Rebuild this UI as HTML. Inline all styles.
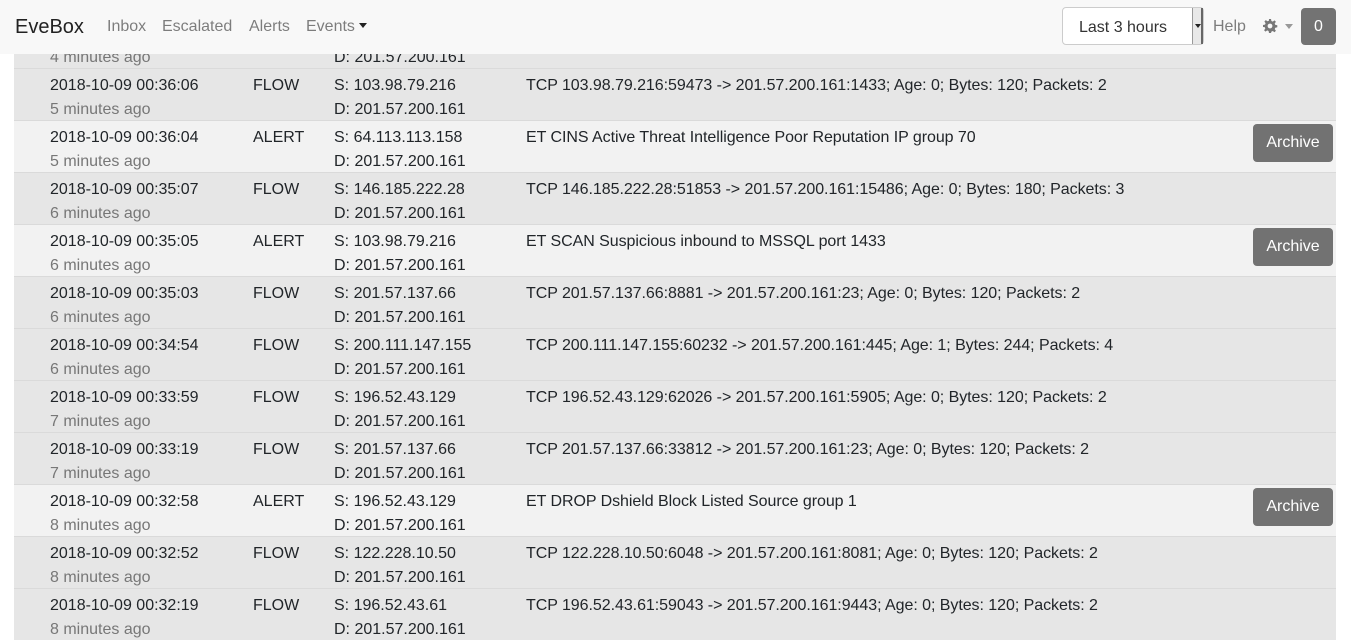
<!DOCTYPE html>
<html><head><meta charset="utf-8"><style>
*{box-sizing:border-box;margin:0;padding:0}
body{width:1351px;height:642px;overflow:hidden;background:#fff;font-family:"Liberation Sans",sans-serif;font-size:16px;color:#212529;position:relative}
.nav{position:absolute;top:0;left:0;width:1351px;height:54px;background:#f8f8f8;z-index:5}
.nav span{position:absolute;top:17px;line-height:20px;color:rgba(0,0,0,.5)}
.row{position:absolute;left:14px;width:1322px;height:52px;border-top:1px solid #dadada}
.f{background:#e6e6e6}.a{background:#f2f2f2}
.row div{position:absolute;line-height:24px;white-space:nowrap}
.ago{color:#777}
.row .btn{position:absolute;right:3px;top:3px;width:80px;height:38px;background:#727272;color:#fff;border-radius:4px;text-align:center;line-height:38px}
</style></head><body>
<div class="nav">
<span style="left:15px;top:16px;font-size:20px;color:#222;line-height:22px">EveBox</span>
<span style="left:107px">Inbox</span>
<span style="left:162px">Escalated</span>
<span style="left:249px">Alerts</span>
<span style="left:306px">Events <span style="position:static;display:inline-block;width:0;height:0;border-left:4px solid transparent;border-right:4px solid transparent;border-top:5px solid #222;vertical-align:3px"></span></span>
<div style="position:absolute;left:1062px;top:7px;width:142px;height:38px;border:1px solid #ccc;border-radius:4px;background:#fff"><div style="position:absolute;left:16px;top:10px;line-height:20px;color:#333">Last 3 hours</div><div style="position:absolute;right:0;top:0;width:11px;height:36px;background:#e8e8e8;border-left:1px solid #999;border-right:2px solid #666"><div style="position:absolute;left:2px;top:16px;border-left:3px solid transparent;border-right:3px solid transparent;border-top:4px solid #222"></div></div></div>
<span style="left:1213px">Help</span>
<span style="left:1262px;top:18px"><svg width="16" height="16" viewBox="0 0 16 16"><path fill="#777" d="M7 1h2l.4 2 1.4.6 1.7-1.2 1.4 1.4-1.2 1.7.6 1.4 2 .4v2l-2 .4-.6 1.4 1.2 1.7-1.4 1.4-1.7-1.2-1.4.6L9 15H7l-.4-2-1.4-.6-1.7 1.2-1.4-1.4 1.2-1.7-.6-1.4L1 9V7l2-.4.6-1.4-1.2-1.7 1.4-1.4 1.7 1.2 1.4-.6zM8 5.6A2.4 2.4 0 1 0 8 10.4 2.4 2.4 0 1 0 8 5.6z"/></svg></span>
<span style="left:1285px;top:24px;width:0;height:0;border-left:4px solid transparent;border-right:4px solid transparent;border-top:5px solid #999"></span>
<div style="position:absolute;left:1301px;top:8px;width:35px;height:37px;background:#737373;border-radius:4px;color:#fff;text-align:center;line-height:37px">0</div>
</div>
<div class="row f" style="top:16px"><div class="ago" style="left:36px;top:29px">4 minutes ago</div><div style="left:320px;top:29px">D: 201.57.200.161</div></div>
<div id="rows"></div>
<script>
var d=[
["2018-10-09 00:36:06","5","FLOW","103.98.79.216","TCP 103.98.79.216:59473 -> 201.57.200.161:1433; Age: 0; Bytes: 120; Packets: 2"],
["2018-10-09 00:36:04","5","ALERT","64.113.113.158","ET CINS Active Threat Intelligence Poor Reputation IP group 70"],
["2018-10-09 00:35:07","6","FLOW","146.185.222.28","TCP 146.185.222.28:51853 -> 201.57.200.161:15486; Age: 0; Bytes: 180; Packets: 3"],
["2018-10-09 00:35:05","6","ALERT","103.98.79.216","ET SCAN Suspicious inbound to MSSQL port 1433"],
["2018-10-09 00:35:03","6","FLOW","201.57.137.66","TCP 201.57.137.66:8881 -> 201.57.200.161:23; Age: 0; Bytes: 120; Packets: 2"],
["2018-10-09 00:34:54","6","FLOW","200.111.147.155","TCP 200.111.147.155:60232 -> 201.57.200.161:445; Age: 1; Bytes: 244; Packets: 4"],
["2018-10-09 00:33:59","7","FLOW","196.52.43.129","TCP 196.52.43.129:62026 -> 201.57.200.161:5905; Age: 0; Bytes: 120; Packets: 2"],
["2018-10-09 00:33:19","7","FLOW","201.57.137.66","TCP 201.57.137.66:33812 -> 201.57.200.161:23; Age: 0; Bytes: 120; Packets: 2"],
["2018-10-09 00:32:58","8","ALERT","196.52.43.129","ET DROP Dshield Block Listed Source group 1"],
["2018-10-09 00:32:52","8","FLOW","122.228.10.50","TCP 122.228.10.50:6048 -> 201.57.200.161:8081; Age: 0; Bytes: 120; Packets: 2"],
["2018-10-09 00:32:19","8","FLOW","196.52.43.61","TCP 196.52.43.61:59043 -> 201.57.200.161:9443; Age: 0; Bytes: 120; Packets: 2"]];
var h="";d.forEach(function(r,i){var t=68+i*52;var al=r[2]=="ALERT";
h+='<div class="row '+(al?'a':'f')+'" style="top:'+t+'px"><div style="left:36px;top:5px">'+r[0]+'</div><div class="ago" style="left:36px;top:29px">'+r[1]+' minutes ago</div><div style="left:239px;top:5px">'+r[2]+'</div><div style="left:320px;top:5px">S: '+r[3]+'</div><div style="left:320px;top:29px">D: 201.57.200.161</div><div style="left:512px;top:5px;letter-spacing:-0.05px">'+r[4].replace(/>/g,'&gt;')+'</div>'+(al?'<div class="btn">Archive</div>':'')+'</div>';});
document.getElementById("rows").outerHTML=h;
</script>
</body></html>
